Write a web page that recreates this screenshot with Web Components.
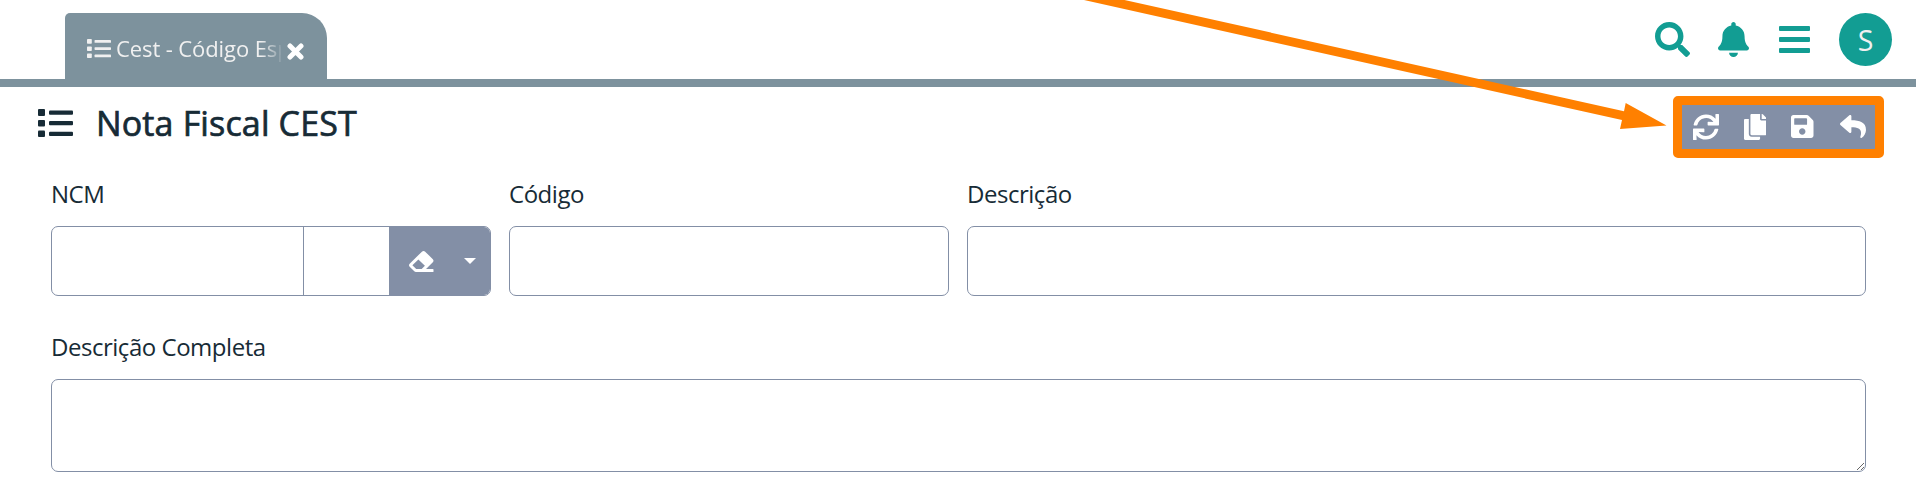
<!DOCTYPE html>
<html lang="pt-BR">
<head>
<meta charset="utf-8">
<title>Nota Fiscal CEST</title>
<style>
html,body{margin:0;height:100%;background:#fff;overflow:hidden}
body{font-family:"Open Sans","Noto Sans",sans-serif;color:#172b36}
</style>
</head>
<body>
<cest-app></cest-app>
<script>
const ICONS = {
  list: ['0 0 35 28', '<rect width="7" height="7" rx="1"/><rect y="11" width="7" height="6.5" rx="1"/><rect y="21.500" width="7" height="6.500" rx="1"/><rect x="11" y="1.500" width="24" height="4.200" rx="1"/><rect x="11" y="12" width="24" height="4.200" rx="1"/><rect x="11" y="22.800" width="24" height="4.200" rx="1"/>'],
  close: ['0 0 17 17', '<path d="M3 3 14 14M14 3 3 14" fill="none" stroke="currentColor" stroke-width="5" stroke-linecap="round"/>'],
  search: ['0 0 512 512', '<path d="M505 442.7L405.3 343c-4.5-4.500-10.600-7-17-7H372c27.600-35.300 44-79.700 44-128C416 93.100 322.900 0 208 0S0 93.100 0 208s93.100 208 208 208c48.300 0 92.700-16.400 128-44v16.300c0 6.400 2.500 12.500 7 17l99.700 99.700c9.400 9.400 24.600 9.400 33.900 0l28.300-28.300c9.400-9.400 9.400-24.600.1-34zM208 336c-70.700 0-128-57.200-128-128 0-70.700 57.200-128 128-128 70.700 0 128 57.200 128 128 0 70.700-57.200 128-128 128z"/>'],
  bell: ['0 0 448 512', '<path d="M224 512c35.320 0 63.970-28.650 63.970-64H160.030c0 35.350 28.650 64 63.970 64zm215.390-149.710c-19.320-20.760-55.470-51.990-55.470-154.290 0-77.700-54.480-139.900-127.940-155.160V32c0-17.670-14.320-32-31.980-32s-31.980 14.330-31.980 32v20.840C118.560 68.100 64.080 130.300 64.080 208c0 102.300-36.150 133.530-55.470 154.290-6 6.450-8.660 14.160-8.610 21.710.11 16.400 12.980 32 32.100 32h383.800c19.120 0 32-15.600 32.100-32 .05-7.550-2.610-15.270-8.610-21.710z"/>'],
  bars: ['0 0 31 27', '<rect width="31" height="5" rx="1"/><rect y="11" width="31" height="5" rx="1"/><rect y="22" width="31" height="5" rx="1"/>'],
  sync: ['0 0 512 512', '<path d="M440.650 12.570l4 82.770A247.160 247.160 0 0 0 255.830 8C134.730 8 33.910 94.920 12.290 209.820A12 12 0 0 0 24.090 224h49.050a12 12 0 0 0 11.670-9.260 175.910 175.910 0 0 1 317-56.940l-101.460-4.860a12 12 0 0 0-12.570 12v47.410a12 12 0 0 0 12 12H500a12 12 0 0 0 12-12V12a12 12 0 0 0-12-12h-47.370a12 12 0 0 0-11.980 12.570zM255.830 432a175.610 175.610 0 0 1-146-77.800l101.800 4.870a12 12 0 0 0 12.570-12v-47.400a12 12 0 0 0-12-12H12a12 12 0 0 0-12 12V500a12 12 0 0 0 12 12h47.350a12 12 0 0 0 12-12.600l-4.150-82.570A247.170 247.170 0 0 0 255.830 504c121.110 0 221.930-86.920 243.550-201.820a12 12 0 0 0-11.800-14.180h-49.050a12 12 0 0 0-11.670 9.260A175.860 175.860 0 0 1 255.830 432z"/>'],
  copy: ['0 0 448 512', '<path d="M320 448v40c0 13.255-10.745 24-24 24H24c-13.255 0-24-10.745-24-24V120c0-13.255 10.745-24 24-24h72v296c0 30.879 25.121 56 56 56h168zm0-344V0H152c-13.255 0-24 10.745-24 24v368c0 13.255 10.745 24 24 24h272c13.255 0 24-10.745 24-24V128H344c-13.200 0-24-10.800-24-24zm120.971-31.029L375.029 7.029A24 24 0 0 0 358.059 0H352v96h96v-6.059a24 24 0 0 0-7.029-16.970z"/>'],
  save: ['0 32 448 448', '<path d="M433.941 129.941l-83.882-83.882A48 48 0 0 0 316.118 32H48C21.490 32 0 53.490 0 80v352c0 26.510 21.490 48 48 48h352c26.510 0 48-21.490 48-48V163.882a48 48 0 0 0-14.059-33.941zM224 416c-35.346 0-64-28.654-64-64 0-35.346 28.654-64 64-64s64 28.654 64 64c0 35.346-28.654 64-64 64zm96-304.520V212c0 6.627-5.373 12-12 12H76c-6.627 0-12-5.373-12-12V108c0-6.627 5.373-12 12-12h228.520c3.183 0 6.235 1.264 8.485 3.515l3.480 3.480A11.996 11.996 0 0 1 320 111.480z"/>'],
  reply: ['0 32 512 448', '<path d="M8.309 189.836L184.313 37.851C199.719 24.546 224 35.347 224 56.015v80.053c160.629 1.839 288 34.032 288 186.258 0 61.441-39.581 122.309-83.333 154.132-13.653 9.931-33.111-2.533-28.077-18.631 45.344-145.012-21.507-183.510-176.590-185.742V360c0 20.700-24.300 31.453-39.687 18.164l-176.004-152c-11.071-9.562-11.086-26.753 0-36.328z"/>'],
  eraser: ['0 32 512 448', '<path d="M497.941 273.941c18.745-18.745 18.745-49.137 0-67.882l-160-160c-18.745-18.745-49.136-18.746-67.883 0l-256 256c-18.745 18.745-18.745 49.137 0 67.882l96 96A48.004 48.004 0 0 0 144 480h356c6.627 0 12-5.373 12-12v-40c0-6.627-5.373-12-12-12H355.883l142.058-142.059zm-302.627-62.627l137.373 137.373L265.373 416H150.628l-80-80 124.686-124.686z"/>'],
  caret: ['0 0 12 6', '<path d="M0 0H12L6 6z"/>']
};

function define(name, render) {
  customElements.define(name, class extends HTMLElement {
    constructor() {
      super();
      this.attachShadow({mode: 'open'});
    }
    connectedCallback() { this.shadowRoot.innerHTML = render(this); }
  });
}

define('ui-icon', el => {
  const [box, body] = ICONS[el.getAttribute('name')];
  return `<style>:host{display:block;flex:none;width:${el.getAttribute('w')}px;height:${el.getAttribute('h')}px}svg{display:block;width:100%;height:100%;fill:currentColor}</style>
  <svg viewBox="${box}" preserveAspectRatio="none" aria-hidden="true">${body}</svg>`;
});

define('app-tab', () => `<style>
:host{display:flex;box-sizing:border-box;width:262px;height:66px;margin-top:13px;padding:0 0 0 22px;background:#7d929d;border-radius:5px 25px 0 0;color:#f0f0f0}
ui-icon{margin-top:26px}
.name{margin-left:5px;width:165px;height:40px;margin-top:15px;line-height:40px;font-size:22px;letter-spacing:-.1px;white-space:nowrap;overflow:hidden;-webkit-mask-image:linear-gradient(90deg,#000 145px,transparent 168px);mask-image:linear-gradient(90deg,#000 145px,transparent 168px)}
.x{margin:30px 0 0 6px;color:#fff}
</style><ui-icon name="list" w="24" h="19"></ui-icon><span class="name"><slot></slot></span><ui-icon class="x" name="close" w="17" h="17"></ui-icon>`);

define('user-avatar', () => `<style>
:host{display:block;width:53px;height:53px;border-radius:50%;background:#129d93;color:#f0f0f0;text-align:center;font-size:28.500px;line-height:55px}
</style><slot></slot>`);

define('top-bar', () => `<style>
:host{display:flex;box-sizing:border-box;height:87px;padding:0 24px 0 65px;border-bottom:8px solid #7d929d;justify-content:space-between;align-items:flex-start;color:#129d93}
nav{display:flex;align-items:center;height:53px;margin-top:13px}
.b{margin-left:28px}.m{margin-left:30px}user-avatar{margin-left:29px}
</style><app-tab>Cest - Código Esp</app-tab>
<nav><ui-icon name="search" w="35" h="35"></ui-icon><ui-icon class="b" name="bell" w="31" h="35"></ui-icon><ui-icon class="m" name="bars" w="31" h="27"></ui-icon><user-avatar>S</user-avatar></nav>`);

define('tool-bar', () => `<style>
:host{display:flex;box-sizing:border-box;width:211px;height:62px;margin-top:9px;border:9px solid #ff8000;border-radius:5px;background:#838fa6;color:#fff;align-items:center;padding:0 0 1px 11px}
.c{margin-left:24.500px}.s{margin-left:25px}.r{margin-left:26px}
</style><ui-icon name="sync" w="26" h="26"></ui-icon><ui-icon class="c" name="copy" w="22.500" h="26"></ui-icon><ui-icon class="s" name="save" w="22.500" h="23"></ui-icon><ui-icon class="r" name="reply" w="26" h="23"></ui-icon>`);

define('page-heading', () => `<style>
:host{display:flex;height:82px;padding:0 32px 0 38px;justify-content:space-between;align-items:flex-start}
div{display:flex}
ui-icon{margin-top:22px}
h1{margin:12px 0 0 23px;font-size:34px;line-height:48px;font-weight:500;letter-spacing:.15px;-webkit-text-stroke:.7px currentColor;white-space:nowrap}
</style><div><ui-icon name="list" w="35" h="28"></ui-icon><h1><slot></slot></h1></div><tool-bar></tool-bar>`);

define('form-field', el => `<style>
:host{display:block;min-width:0}
label{display:block;height:57px;line-height:50px;font-size:24px;letter-spacing:-.47px;white-space:nowrap}
</style><label>${el.getAttribute('label')}</label><slot></slot>`);

define('text-box', () => `<style>
:host{display:block}
input{display:block;box-sizing:border-box;width:100%;height:70px;border:1px solid #838fa6;border-radius:7px;background:#fff;outline:0;padding:0 12px}
</style><input>`);

define('text-area', () => `<style>
:host{display:block}
textarea{display:block;box-sizing:border-box;width:100%;height:93px;border:1px solid #838fa6;border-radius:7px;background:#fff;outline:0;resize:vertical}
</style><textarea></textarea>`);

define('lookup-box', () => `<style>
:host{display:flex;box-sizing:border-box;height:70px;border:1px solid #838fa6;border-radius:7px;background:#fff;overflow:hidden}
input{box-sizing:border-box;border:0;outline:0;background:transparent;padding:0 10px;min-width:0}
.code{width:252px;border-right:1px solid #838fa6}
.text{width:85px}
.actions{flex:1;display:flex;align-items:center;background:#838fa6;color:#fff;padding-left:20px}
.c{margin-left:30px}
</style><input class="code"><input class="text"><div class="actions"><ui-icon name="eraser" w="24.500" h="21"></ui-icon><ui-icon class="c" name="caret" w="12" h="6"></ui-icon></div>`);

define('callout-arrow', () => `<style>
:host{position:absolute;left:0;top:0;width:1916px;height:495px;pointer-events:none}
svg{display:block}
</style><svg width="1916" height="495" viewBox="0 0 1916 495" aria-hidden="true"><path fill="#ff8000" d="M1084 0H1124.500L1624 111.300 1625.700 103 1666.500 125.400 1620 129 1622 120z"/></svg>`);

define('cest-app', () => `<style>
:host{display:block;position:relative;width:1916px;height:495px;overflow:hidden}
main{display:grid;grid-template-columns:440px 440px 899px;column-gap:18px;row-gap:26px;padding-left:51px}
.full{grid-column:1/-1}
</style><top-bar></top-bar><page-heading>Nota Fiscal CEST</page-heading>
<main><form-field label="NCM"><lookup-box></lookup-box></form-field>
<form-field label="Código"><text-box></text-box></form-field>
<form-field label="Descrição"><text-box></text-box></form-field>
<form-field class="full" label="Descrição Completa"><text-area></text-area></form-field></main>
<callout-arrow></callout-arrow>`);
</script>
</body>
</html>
